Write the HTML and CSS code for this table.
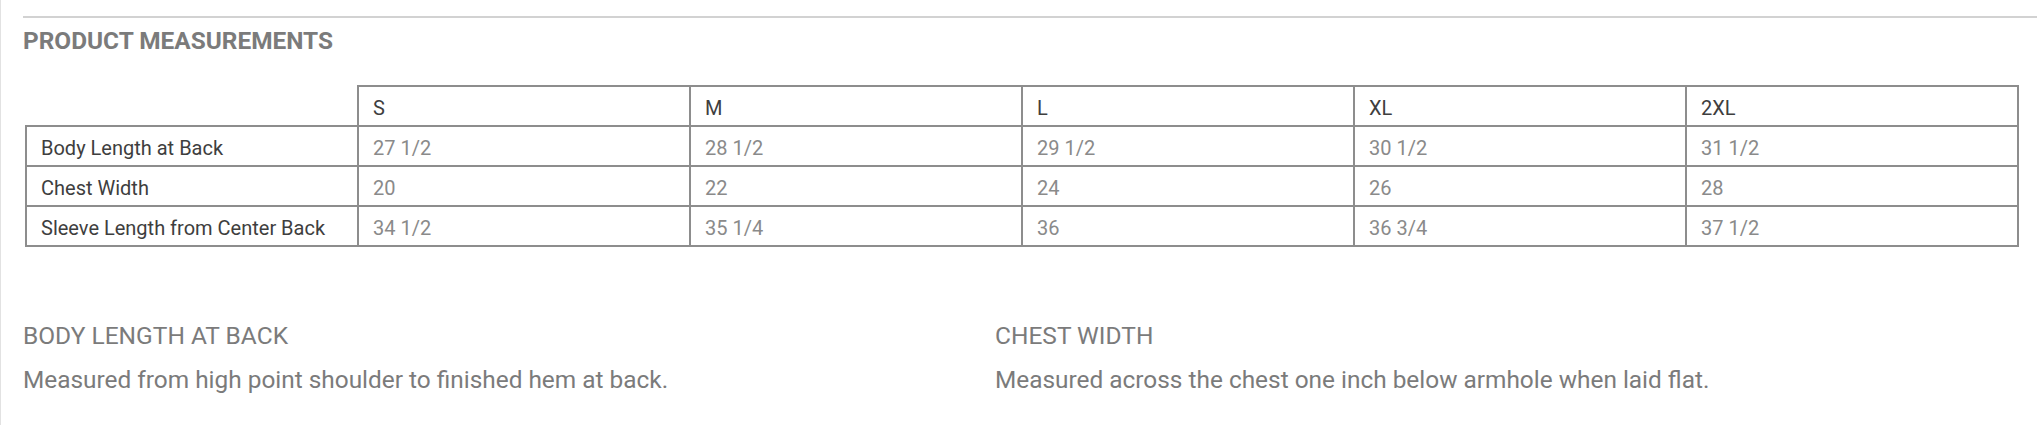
FILE: index.html
```html
<!DOCTYPE html>
<html lang="en">
<head>
<meta charset="utf-8">
<title>Product Measurements</title>
<link rel="stylesheet" href="styles.css">
</head>
<body>
<div class="page">
  <hr class="rule">
  <h2 class="heading">PRODUCT MEASUREMENTS</h2>
  <table class="sizes">
    <colgroup>
      <col><col><col><col><col><col>
    </colgroup>
    <thead>
      <tr>
        <th class="blank"></th>
        <th>S</th>
        <th>M</th>
        <th>L</th>
        <th>XL</th>
        <th>2XL</th>
      </tr>
    </thead>
    <tbody>
      <tr>
        <th class="label">Body Length at Back</th>
        <td>27 1/2</td><td>28 1/2</td><td>29 1/2</td><td>30 1/2</td><td>31 1/2</td>
      </tr>
      <tr>
        <th class="label">Chest Width</th>
        <td>20</td><td>22</td><td>24</td><td>26</td><td>28</td>
      </tr>
      <tr>
        <th class="label">Sleeve Length from Center Back</th>
        <td>34 1/2</td><td>35 1/4</td><td>36</td><td>36 3/4</td><td>37 1/2</td>
      </tr>
    </tbody>
  </table>
  <div class="notes">
    <div class="note">
      <h3 class="note-title">BODY LENGTH AT BACK</h3>
      <p class="note-text">Measured from high point shoulder to finished hem at back.</p>
    </div>
    <div class="note">
      <h3 class="note-title">CHEST WIDTH</h3>
      <p class="note-text">Measured across the chest one inch below armhole when laid flat.</p>
    </div>
  </div>
</div>
</body>
</html>
```

FILE: styles.css
```css
html, body {
  margin: 0;
  padding: 0;
  background: #ffffff;
}

body {
  font-family: Roboto, "Liberation Sans", sans-serif;
  width: 2040px;
  height: 425px;
  overflow: hidden;
}

.page {
  box-sizing: border-box;
  height: 425px;
  border-left: 1px solid #e2e2e2;
  padding: 16px 3px 0 22px;
}

.rule {
  margin: 0;
  border: 0;
  height: 2px;
  background: #d2d2d2;
}

.heading {
  margin: 9px 0 0 0;
  font-size: 24.4px;
  line-height: 28px;
  font-weight: 700;
  color: #7b7b7b;
  letter-spacing: 0;
}

.sizes {
  margin: 30px 0 0 2px;
  width: 1994px;
  table-layout: fixed;
  border-collapse: collapse;
}

.sizes th,
.sizes td {
  border: 2px solid #8d8d8d;
  padding: 9px 14px 5px 14px;
  height: 24px;
  font-size: 20px;
  line-height: 24px;
  text-align: left;
  white-space: nowrap;
}

.sizes thead th {
  font-weight: 400;
  color: #3e3e3e;
}

.sizes thead th.blank {
  border: none;
}

.sizes th.label {
  font-weight: 400;
  color: #3e3e3e;
}

.sizes td {
  color: #8a8a8a;
}

.notes {
  display: grid;
  grid-template-columns: 972px 1fr;
  margin-top: 75px;
}

.note-title {
  margin: 0;
  font-size: 24.5px;
  line-height: 28px;
  font-weight: 400;
  color: #7b7b7b;
}

.note-text {
  margin: 16px 0 0 0;
  font-size: 24.4px;
  line-height: 28px;
  color: #7b7b7b;
}
```
